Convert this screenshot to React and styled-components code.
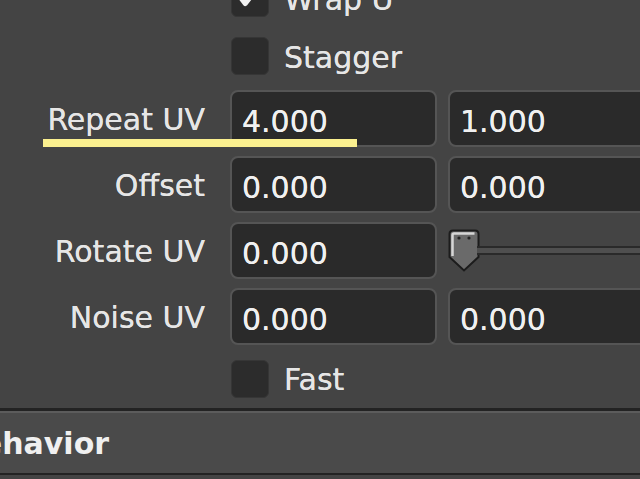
import React from "react";
import styled, { createGlobalStyle } from "styled-components";

const GlobalStyle = createGlobalStyle`
  html, body {
    margin: 0;
    padding: 0;
    background: #444444;
    overflow: hidden;
  }
  body {
    font-family: "DejaVu Sans", "Liberation Sans", sans-serif;
  }
`;

const linhas = [
  { label: "Repeat UV", valores: ["4.000", "1.000"], destaque: true },
  { label: "Offset", valores: ["0.000", "0.000"] },
  { label: "Rotate UV", valores: ["0.000"], slider: true },
  { label: "Noise UV", valores: ["0.000", "0.000"] },
];

function Check({ marcado }) {
  return (
    <CheckBox>
      {marcado && (
        <svg width="38" height="38" viewBox="0 0 38 38">
          <path d="M7 16 L14 25 L29 6" fill="none" stroke="#f2f2f2" strokeWidth="5" strokeLinecap="round" strokeLinejoin="round" />
        </svg>
      )}
    </CheckBox>
  );
}

function Handle() {
  return (
    <svg width="32" height="43" viewBox="0 0 32 43">
      <path d="M5 1.5 H27 Q30.5 1.5 30.5 5 V28 L16 41.5 L1.5 28 V5 Q1.5 1.5 5 1.5 Z" fill="#6a6a6a" stroke="#1c1c1c" strokeWidth="2" />
      <path d="M4.5 27 V6 Q4.5 4.5 6 4.5 H26.5" fill="none" stroke="#d6d6d6" strokeWidth="2.5" />
      <circle cx="11" cy="9" r="1.6" fill="#222" />
      <circle cx="21" cy="9" r="1.6" fill="#222" />
    </svg>
  );
}

export default function App() {
  return (
    <>
      <GlobalStyle />
      <Pagina>
        <Formulario>
          <Linha $altura={58}>
            <span />
            <CheckGrupo>
              <Check marcado />
              <CheckTexto>Wrap U</CheckTexto>
            </CheckGrupo>
          </Linha>
          <Linha $altura={58}>
            <span />
            <CheckGrupo>
              <Check />
              <CheckTexto>Stagger</CheckTexto>
            </CheckGrupo>
          </Linha>
          {linhas.map((linha) => (
            <Linha key={linha.label} $altura={66}>
              <Rotulo>{linha.label}</Rotulo>
              <Campo>{linha.valores[0]}</Campo>
              {linha.slider ? (
                <Slider>
                  <Handle />
                  <Trilho />
                </Slider>
              ) : (
                <Campo>{linha.valores[1]}</Campo>
              )}
              {linha.destaque && <Sublinhado />}
            </Linha>
          ))}
          <Linha $altura={59}>
            <span />
            <CheckGrupo>
              <Check />
              <CheckTexto>Fast</CheckTexto>
            </CheckGrupo>
          </Linha>
        </Formulario>
        <Secao>
          <SecaoTitulo>Behavior</SecaoTitulo>
        </Secao>
      </Pagina>
    </>
  );
}

const Pagina = styled.div`
  width: 640px;
  height: 479px;
  overflow: hidden;
  background: #444444;
  color: #e2e2e2;
`;

const Formulario = styled.div`
  display: flex;
  flex-direction: column;
  margin-top: -31px;
`;

const Linha = styled.div`
  position: relative;
  height: ${({ $altura }) => $altura}px;
  display: grid;
  grid-template-columns: 219px 207px 240px;
  column-gap: 11px;
  align-items: center;
`;

const Rotulo = styled.div`
  font-size: 30px;
  text-align: right;
  padding: 2px 14px 0 0;
  white-space: nowrap;
  color: #e6e6e6;
  text-shadow: 0 0 0.6px #e6e6e6;
`;

const Campo = styled.div`
  box-sizing: border-box;
  height: 57px;
  background: #2a2a2a;
  border: 2px solid #555555;
  border-radius: 8px;
  padding: 6px 0 0 10px;
  display: flex;
  align-items: center;
  font-size: 30px;
  color: #f0f0f0;
  text-shadow: 0 0 0.6px #f0f0f0;
  white-space: nowrap;
`;

const CheckGrupo = styled.div`
  grid-column: 2 / 4;
  display: flex;
  align-items: center;
  gap: 15px;
  padding-left: 1px;
`;

const CheckBox = styled.div`
  box-sizing: border-box;
  width: 38px;
  height: 38px;
  background: #2c2c2c;
  border: 1px solid #363636;
  border-radius: 6px;
  flex-shrink: 0;
  display: flex;
  align-items: center;
  justify-content: center;
`;

const CheckTexto = styled.span`
  font-size: 30px;
  padding-top: 2px;
  color: #e6e6e6;
  text-shadow: 0 0 0.6px #e6e6e6;
`;

const Slider = styled.div`
  display: flex;
  align-items: center;
  height: 57px;
`;

const Trilho = styled.div`
  flex: 1;
  height: 5px;
  margin-left: -3px;
  background: #4f4f4f;
  border-top: 2px solid #2a2a2a;
  border-bottom: 2px solid #2a2a2a;
`;

const Sublinhado = styled.div`
  position: absolute;
  left: 43px;
  top: 54px;
  width: 314px;
  height: 8px;
  background: #fbf08f;
`;

const Secao = styled.div`
  height: 59px;
  background: #4a4a4a;
  border-top: 3px solid #232323;
  box-shadow: inset 0 2px 0 #5c5c5c;
  border-bottom: 2px solid #232323;
  display: flex;
  align-items: center;
  padding-top: 3px;
  box-sizing: content-box;
  overflow: hidden;
`;

const SecaoTitulo = styled.h2`
  margin: 0 0 0 -41px;
  font-size: 30px;
  font-weight: bold;
  color: #f0f0f0;
  white-space: nowrap;
`;
